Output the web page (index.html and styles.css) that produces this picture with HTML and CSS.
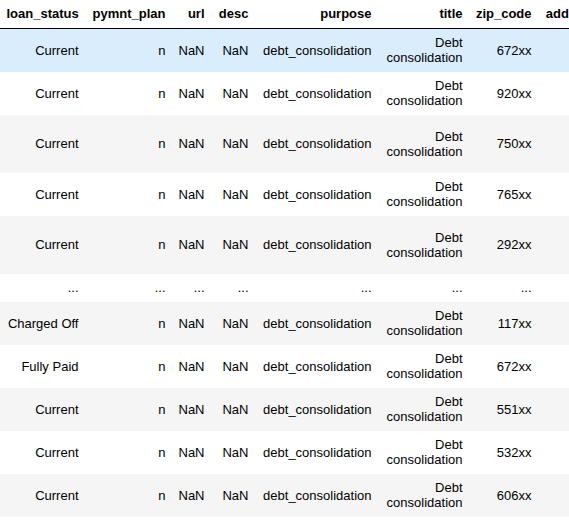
FILE: index.html
```html
<!DOCTYPE html>
<html>
<head>
<meta charset="utf-8">
<link rel="stylesheet" href="styles.css">
</head>
<body>
<table class="df">
  <colgroup>
    <col class="c-status"><col class="c-plan"><col class="c-url"><col class="c-desc"><col class="c-purpose"><col class="c-title"><col class="c-zip"><col class="c-addr">
  </colgroup>
  <thead>
    <tr><th>loan_status</th><th>pymnt_plan</th><th>url</th><th>desc</th><th>purpose</th><th>title</th><th>zip_code</th><th>addr_state</th></tr>
  </thead>
  <tbody>
    <tr class="hover"><td>Current</td><td>n</td><td>NaN</td><td>NaN</td><td>debt_consolidation</td><td>Debt consolidation</td><td>672xx</td><td>KS</td></tr>
    <tr><td>Current</td><td>n</td><td>NaN</td><td>NaN</td><td>debt_consolidation</td><td>Debt consolidation</td><td>920xx</td><td>CA</td></tr>
    <tr class="tall"><td>Current</td><td>n</td><td>NaN</td><td>NaN</td><td>debt_consolidation</td><td>Debt consolidation</td><td>750xx</td><td>TX</td></tr>
    <tr><td>Current</td><td>n</td><td>NaN</td><td>NaN</td><td>debt_consolidation</td><td>Debt consolidation</td><td>765xx</td><td>TX</td></tr>
    <tr class="tall"><td>Current</td><td>n</td><td>NaN</td><td>NaN</td><td>debt_consolidation</td><td>Debt consolidation</td><td>292xx</td><td>SC</td></tr>
    <tr><td>...</td><td>...</td><td>...</td><td>...</td><td>...</td><td>...</td><td>...</td><td>...</td></tr>
    <tr><td>Charged Off</td><td>n</td><td>NaN</td><td>NaN</td><td>debt_consolidation</td><td>Debt consolidation</td><td>117xx</td><td>NY</td></tr>
    <tr><td>Fully Paid</td><td>n</td><td>NaN</td><td>NaN</td><td>debt_consolidation</td><td>Debt consolidation</td><td>672xx</td><td>KS</td></tr>
    <tr><td>Current</td><td>n</td><td>NaN</td><td>NaN</td><td>debt_consolidation</td><td>Debt consolidation</td><td>551xx</td><td>MN</td></tr>
    <tr><td>Current</td><td>n</td><td>NaN</td><td>NaN</td><td>debt_consolidation</td><td>Debt consolidation</td><td>532xx</td><td>WI</td></tr>
    <tr><td>Current</td><td>n</td><td>NaN</td><td>NaN</td><td>debt_consolidation</td><td>Debt consolidation</td><td>606xx</td><td>IL</td></tr>
  </tbody>
</table>
</body>
</html>
```
FILE: styles.css
```css
html, body {
  margin: 0;
  padding: 0;
  background: #ffffff;
  overflow: hidden;
}

body {
  font-family: "Liberation Sans", Arial, sans-serif;
  font-size: 13px;
  color: #000000;
}

.df {
  width: 618px;
  table-layout: fixed;
  border: none;
  border-collapse: collapse;
  border-spacing: 0;
  color: #000000;
  font-size: 13px;
}

.c-status { width: 85px; }
.c-plan { width: 87px; }
.c-url { width: 39px; }
.c-desc { width: 44px; }
.c-purpose { width: 123px; }
.c-title { width: 91px; }
.c-zip { width: 69px; }
.c-addr { width: 80px; }

.df thead {
  border-bottom: 1px solid #000000;
  vertical-align: bottom;
}

.df th,
.df td {
  text-align: right;
  vertical-align: middle;
  padding: 6px 6.5px 7px;
  line-height: 15px;
  white-space: normal;
  border: none;
  overflow: hidden;
}

.df th {
  font-weight: bold;
}

.df tbody tr:nth-child(odd) {
  background: #f5f5f5;
}

.df tbody tr.hover {
  background: #d9edfd;
}

.df tbody tr.tall {
  height: 58px;
}
```
